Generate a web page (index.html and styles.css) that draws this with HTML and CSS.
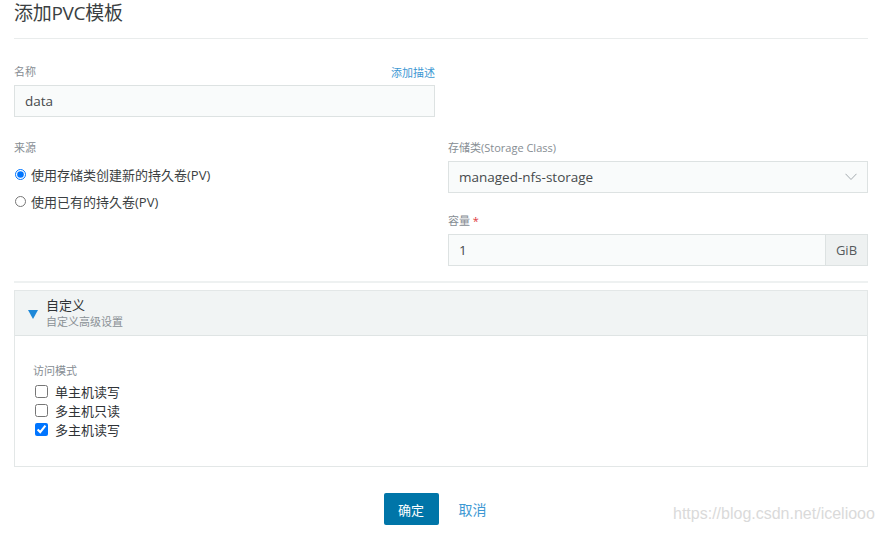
FILE: index.html
```html
<!DOCTYPE html>
<html lang="zh-CN">
<head>
<meta charset="utf-8">
<title>添加PVC模板</title>
<link rel="stylesheet" href="styles.css">
</head>
<body>
<div class="page">
  <h1 class="title">添加PVC模板</h1>
  <div class="hr"></div>

  <div class="grid">
    <div class="field">
      <div class="label-row">
        <span class="label">名称</span>
        <a class="link small">添加描述</a>
      </div>
      <div class="input">data</div>
    </div>
    <div></div>

    <div class="field">
      <div class="label-row"><span class="label">来源</span></div>
      <label class="radio"><input type="radio" name="src" checked><span>使用存储类创建新的持久卷(PV)</span></label>
      <label class="radio"><input type="radio" name="src"><span>使用已有的持久卷(PV)</span></label>
    </div>
    <div class="field">
      <div class="label-row"><span class="label">存储类(Storage Class)</span></div>
      <div class="input select">
        <span>managed-nfs-storage</span>
        <svg class="chev" width="12" height="8" viewBox="0 0 12 8"><path d="M0.5 0.8 L6 6.5 L11.5 0.8" fill="none" stroke="#a4aaaf" stroke-width="1"/></svg>
      </div>
      <div class="label-row second"><span class="label">容量 <span class="req">*</span></span></div>
      <div class="input-group">
        <div class="input grow">1</div>
        <div class="addon">GiB</div>
      </div>
    </div>
  </div>

  <div class="sep"></div>

  <div class="panel">
    <div class="panel-head">
      <span class="tri"></span>
      <div>
        <div class="ph-title">自定义</div>
        <div class="ph-sub">自定义高级设置</div>
      </div>
    </div>
    <div class="panel-body">
      <div class="label">访问模式</div>
      <label class="check"><input type="checkbox"><span>单主机读写</span></label>
      <label class="check"><input type="checkbox"><span>多主机只读</span></label>
      <label class="check"><input type="checkbox" checked><span>多主机读写</span></label>
    </div>
  </div>

  <div class="actions">
    <button class="btn-primary">确定</button>
    <button class="btn-link">取消</button>
  </div>
</div>
<div class="watermark">https://blog.csdn.net/iceliooo</div>
</body>
</html>
```

FILE: styles.css
```css
html, body {
  margin: 0;
  padding: 0;
  background: #fff;
}
body {
  font-family: "Open Sans", "Noto Sans CJK SC", sans-serif;
  color: #464a4c;
  width: 883px;
  height: 534px;
  overflow: hidden;
  position: relative;
}
.page {
  padding: 0 15px 0 14px;
}
.title {
  margin: 0;
  font-size: 19px;
  font-weight: 400;
  line-height: 26px;
  height: 38px;
  color: #3b3f42;
  letter-spacing: -0.3px;
}
.hr {
  height: 1px;
  background: #e9ecec;
}
.grid {
  display: grid;
  grid-template-columns: 421px 420px;
  column-gap: 13px;
  margin-top: 25px;
  row-gap: 23px;
}
.field {
  display: flex;
  flex-direction: column;
}
.label-row {
  display: flex;
  justify-content: space-between;
  align-items: center;
  height: 16px;
  margin-bottom: 5px;
}
.label-row.second {
  margin-top: 20px;
}
.label {
  font-size: 11px;
  color: #868d93;
  line-height: 16px;
}
.req {
  color: #e0393e;
}
.link {
  color: #3d98d3;
  cursor: pointer;
}
.small {
  font-size: 11px;
}
.input {
  box-sizing: border-box;
  height: 32px;
  border: 1px solid #dde2e2;
  background: #f9fbfb;
  font-size: 13.5px;
  line-height: 30px;
  padding: 0 10px;
  color: #464a4c;
}
.select {
  display: flex;
  justify-content: space-between;
  align-items: center;
}
.input-group {
  display: flex;
}
.grow {
  flex: 1;
}
.addon {
  box-sizing: border-box;
  width: 42px;
  height: 32px;
  background: #eef1f1;
  border: 1px solid #dde2e2;
  border-left: none;
  font-size: 13px;
  line-height: 30px;
  text-align: center;
  color: #55595c;
}
.radio {
  display: flex;
  align-items: center;
  font-size: 13px;
  height: 27px;
  color: #3b3f42;
}
.radio input {
  margin: 0 5px 0 1px;
  width: 11px;
  height: 11px;
}
.sep {
  height: 2px;
  background: #eef1f1;
  margin-top: 15px;
}
.panel {
  margin-top: 7px;
  border: 1px solid #e3e7e7;
  height: 177px;
  box-sizing: border-box;
}
.panel-head {
  display: flex;
  align-items: center;
  height: 45px;
  background: #f1f4f4;
  border-bottom: 1px solid #dfe4e4;
  box-sizing: border-box;
  padding-left: 13px;
}
.tri {
  width: 0;
  height: 0;
  border-left: 5.5px solid transparent;
  border-right: 5.5px solid transparent;
  border-top: 9px solid #1e88d8;
  margin-right: 8px;
  margin-top: 3px;
}
.ph-title {
  font-size: 13px;
  line-height: 18px;
  color: #2f3336;
}
.ph-sub {
  font-size: 11px;
  line-height: 16px;
  color: #8b9196;
}
.panel-body {
  padding: 27px 18px 0 18px;
}
.panel-body .label {
  margin-bottom: 3px;
}
.check {
  display: flex;
  align-items: center;
  font-size: 13px;
  height: 19px;
  color: #2f3336;
}
.check input {
  margin: 0 7px 0 2px;
  width: 13px;
  height: 13px;
}
.actions {
  display: flex;
  justify-content: center;
  gap: 10px;
  margin-top: 26px;
  padding-right: 2px;
}
.btn-primary {
  width: 55px;
  height: 32px;
  border: none;
  border-radius: 2px;
  background: #0075a8;
  color: #fff;
  font-family: inherit;
  font-size: 13px;
  cursor: pointer;
}
.btn-link {
  height: 32px;
  border: none;
  background: transparent;
  color: #3d98d3;
  font-family: inherit;
  font-size: 14px;
  padding: 0 10px;
}
.watermark {
  position: absolute;
  left: 673px;
  top: 505px;
  font-family: "Liberation Sans", Arial, sans-serif;
  font-size: 16px;
  color: #dadada;
  white-space: nowrap;
}
```
